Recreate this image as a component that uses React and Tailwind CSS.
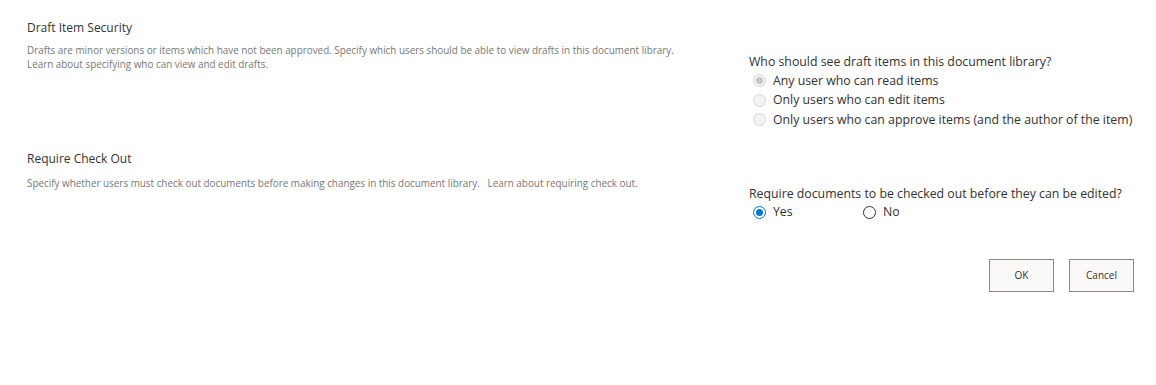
import { useState } from 'react'

const font = { fontFamily: '"Segoe UI", "Open Sans", "Liberation Sans", sans-serif' }

function Radio({ checked, disabled, label, onChange }) {
  return (
    <label className="flex items-center h-[19.5px] gap-[7px] cursor-default">
      <span
        className={
          'w-[13px] h-[13px] rounded-full border flex items-center justify-center shrink-0 ' +
          (disabled
            ? 'border-[#d6d6d6] bg-[#f3f3f3]'
            : checked
            ? 'border-[#0078d4] bg-white'
            : 'border-[#323130] bg-white')
        }
        onClick={disabled ? undefined : onChange}
      >
        {checked && (
          <span
            className={
              'w-[7px] h-[7px] rounded-full ' + (disabled ? 'bg-[#c6c6c6]' : 'bg-[#0078d4]')
            }
          />
        )}
      </span>
      <span className="text-[12.3px] text-[#323130]">{label}</span>
    </label>
  )
}

export default function App() {
  const [checkout, setCheckout] = useState('yes')

  return (
    <div className="w-[1156px] h-[385px] bg-white" style={font}>
      {/* Draft Item Security */}
      <div className="flex pt-[19px]">
        <div className="w-[748px] pl-[27px] pr-[40px]">
          <h3 className="text-[12px] leading-[18px] text-[#333]">Draft Item Security</h3>
          <p className="mt-[6px] text-[9.9px] leading-[14px] text-[#777]">
            Drafts are minor versions or items which have not been approved. Specify which users should be able to view drafts in this document library.
            <br />
            Learn about specifying who can view and edit drafts.
          </p>
        </div>
        <div className="pt-[34px] pl-px">
          <p className="text-[12.3px] leading-[18px] text-[#323130]">Who should see draft items in this document library?</p>
          <div className="pl-[4px]">
            <Radio disabled checked label="Any user who can read items" />
            <Radio disabled label="Only users who can edit items" />
            <Radio disabled label="Only users who can approve items (and the author of the item)" />
          </div>
        </div>
      </div>

      {/* Require Check Out */}
      <div className="flex mt-[20px]">
        <div className="w-[748px] pl-[27px] pr-[40px]">
          <h3 className="text-[12px] leading-[18px] text-[#333]">Require Check Out</h3>
          <p className="mt-[8px] text-[9.9px] leading-[14px] text-[#777]">
            Specify whether users must check out documents before making changes in this document library.&nbsp;&nbsp; Learn about requiring check out.
          </p>
        </div>
        <div className="pt-[35px] pl-px">
          <p className="text-[12.3px] leading-[18px] text-[#323130]">Require documents to be checked out before they can be edited?</p>
          <div className="flex pl-[4px]">
            <div className="w-[110px]">
              <Radio checked={checkout === 'yes'} label="Yes" onChange={() => setCheckout('yes')} />
            </div>
            <Radio checked={checkout === 'no'} label="No" onChange={() => setCheckout('no')} />
          </div>
        </div>
      </div>

      {/* Buttons */}
      <div className="flex justify-end gap-[15px] pr-[22px] mt-[37px]">
        <button className="w-[65px] h-[33px] border border-[#8a8886] bg-[#faf9f8] text-[10px] text-[#323130]">OK</button>
        <button className="w-[65px] h-[33px] border border-[#8a8886] bg-[#faf9f8] text-[10px] text-[#323130]">Cancel</button>
      </div>
    </div>
  )
}
